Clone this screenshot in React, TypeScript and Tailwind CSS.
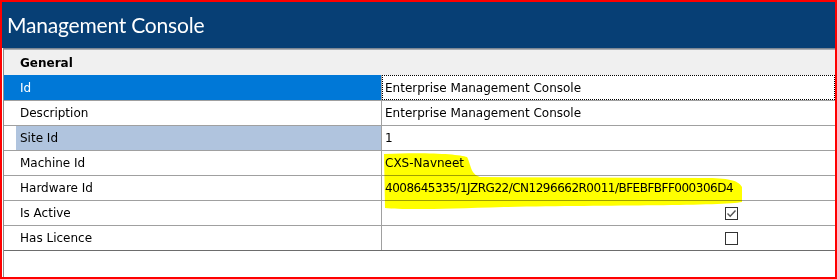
import React from 'react';

const ui = { fontFamily: '"DejaVu Sans", Verdana, sans-serif' };

type Row = { label: string; value?: string; check?: boolean; state?: 'focus' | 'sel'; tight?: boolean };

const rows: Row[] = [
  { label: 'Id', value: 'Enterprise Management Console', state: 'focus' },
  { label: 'Description', value: 'Enterprise Management Console' },
  { label: 'Site Id', value: '1', state: 'sel' },
  { label: 'Machine Id', value: 'CXS-Navneet' },
  { label: 'Hardware Id', value: '4008645335/1JZRG22/CN1296662R0011/BFEBFBFF000306D4', tight: true },
  { label: 'Is Active', check: true },
  { label: 'Has Licence', check: false },
];

function CheckBox({ checked }: { checked: boolean }) {
  return (
    <span className="w-[13px] h-[13px] border border-[#333333] bg-white flex items-center justify-center">
      {checked && (
        <svg width="11" height="11" viewBox="0 0 11 11">
          <path d="M1.5 5.5 L4.2 8.2 L9.5 2.5" fill="none" stroke="#555555" strokeWidth="1.4" />
        </svg>
      )}
    </span>
  );
}

function GridRow({ row, first }: { row: Row; first: boolean }) {
  const focus = row.state === 'focus';
  const sel = row.state === 'sel';
  return (
    <div className={`flex border-b border-[#a0a0a0] ${first ? 'h-[26px]' : 'h-[25px]'}`}>
      <div className={`w-[12px] shrink-0 ${focus ? 'bg-[#0078d7]' : 'bg-white'}`} />
      <div
        className={`w-[365px] shrink-0 flex items-center pl-[4px] text-[12px] ${
          focus ? 'bg-[#0078d7] text-white' : sel ? 'bg-[#b0c4de] text-black' : 'text-black'
        }`}
      >
        {row.label}
      </div>
      <div className="w-px bg-[#a0a0a0] shrink-0" />
      <div
        className={`flex-1 flex items-center text-[12px] text-black ${
          focus ? 'border border-dotted border-black pl-[2px]' : 'pl-[3px]'
        } ${row.check !== undefined ? 'pl-[343px]' : ''} ${row.tight ? 'tracking-[-0.5px]' : ''}`}
      >
        {row.check !== undefined ? <CheckBox checked={row.check} /> : row.value}
      </div>
    </div>
  );
}

export default function App() {
  return (
    <div className="relative w-[837px] h-[279px] border-2 border-[#ff0000] bg-white flex flex-col overflow-hidden" style={ui}>
      <div className="h-[46px] bg-[#073f75] flex items-center pl-[5px] text-white text-[21px] tracking-[-0.2px]" style={{ fontFamily: 'Lato, "Open Sans", sans-serif' }}>
        Management Console
      </div>
      <div className="flex-1 flex flex-col pl-px">
        <div className="flex-1 flex flex-col border-l border-[#8c8c8c]">
          <div className="h-px bg-[#7c8794]" />
          <div className="h-px bg-[#a9adb3]" />
          <div className="h-[25px] bg-[#f0f0f0] flex items-center pl-[16px] text-[12px] font-bold text-black">
            General
          </div>
          {rows.map((r, i) => (
            <GridRow key={r.label} row={r} first={i === 0} />
          ))}
          <div className="-mt-px border-t border-[#6d6d6d]" />
          <div className="flex-1" />
        </div>
      </div>
      <svg className="absolute left-0 top-0 pointer-events-none mix-blend-multiply" width="837" height="279" viewBox="-2 -2 837 279">
        <path
          d="M380 150 C420 148 455 150 463 153 C467 160 466 170 476 173 L700 174 C724 174 734 176 738 183 L738 198 C720 202 600 201 500 203 C440 205 400 206 381 204 Z"
          fill="#ffff00"
        />
      </svg>
    </div>
  );
}
